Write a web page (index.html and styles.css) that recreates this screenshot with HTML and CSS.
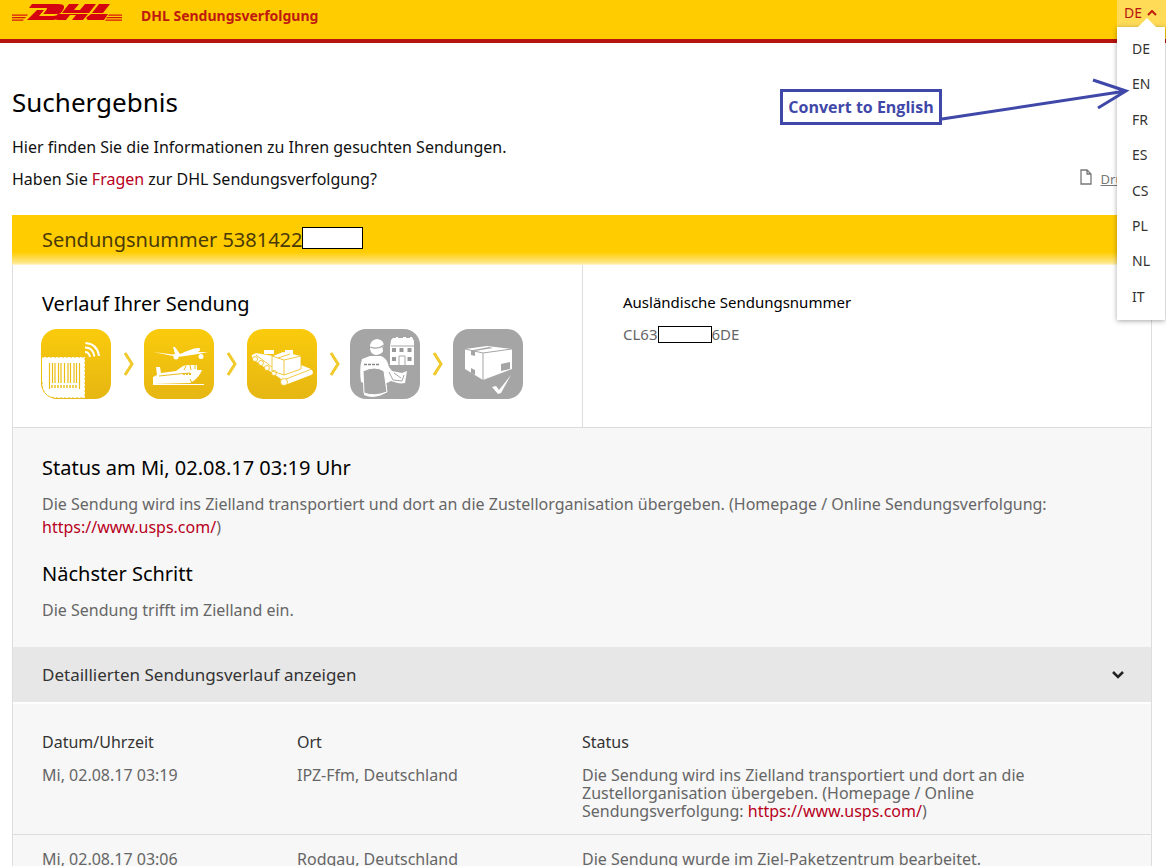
FILE: index.html
```
<!DOCTYPE html>
<html lang="de">
<head>
<meta charset="utf-8">
<title>DHL Sendungsverfolgung</title>
<link rel="stylesheet" href="styles.css">
</head>
<body>
<header class="header">
  <svg class="logo" width="112" height="18" viewBox="0 0 112 18" role="img" aria-label="DHL">
    <g fill="#d40511">
      <path d="M0 10.500h16l-1 1.300H0zM0 13h14l-1 1.300H0zM0 15.500h12l-1 1.300H0z" opacity=".9"/>
      <path d="M97 10.500h13v1.300H96zM95 13h15v1.300H94zM94 15.500h16v1.300H93z" opacity=".9"/>
      <path d="M20 0h26c7 0 7 3 5 6-2 3-3 4-5 4H32c-1 0-1 0 0-1l3-4c0-1 0-1-1-1H17zM25 6h7l-5 6h14c3 0 4-1 5-2h5c-3 4-6 6-12 6H15z"/>
      <path d="M57 0h10l-5 6h6l5-6h11l-7 9H50zM49 10h27l-5 6H60l4-5h-6l-4 5H44z"/>
      <path d="M87 0h11l-7 9H80zM79 10h17l-4 6H78c-4 0-4-2-3-3z"/>
    </g>
  </svg>
  <span class="header-title">DHL Sendungsverfolgung</span>
  <nav class="language">
    <button class="language-toggle" type="button" aria-expanded="true">DE
      <svg width="10" height="6" viewBox="0 0 10 6" aria-hidden="true"><path d="M1 5l4-4 4 4" fill="none" stroke="#c01a10" stroke-width="2"/></svg>
    </button>
    <div class="language-menu">
      <a href="#de">DE</a><a href="#en">EN</a><a href="#fr">FR</a><a href="#es">ES</a><a href="#cs">CS</a><a href="#pl">PL</a><a href="#nl">NL</a><a href="#it">IT</a>
    </div>
  </nav>
</header>

<div class="callout">Convert to English</div>
<svg class="callout-arrow" width="190" height="50" viewBox="0 0 190 50" aria-hidden="true">
  <path d="M2 44L186 16M153 5l33 11-28 17" fill="none" stroke="#3f48a8" stroke-width="3"/>
</svg>

<main class="content">
  <h1>Suchergebnis</h1>
  <p class="intro">Hier finden Sie die Informationen zu Ihren gesuchten Sendungen.</p>
  <div class="help-row">
    <p class="intro">Haben Sie <a href="#fragen">Fragen</a> zur DHL Sendungsverfolgung?</p>
    <a class="print" href="#drucken">
      <svg width="12" height="16" viewBox="0 0 12 16" aria-hidden="true"><path d="M1 1h6l4 4v10H1zM7 1v4h4" fill="none" stroke="#777" stroke-width="1.300"/></svg>
      <span>Drucken</span>
    </a>
  </div>

  <section class="panel">
    <h2 class="panel-title">Sendungsnummer 5381422<span class="redacted redacted-title"></span></h2>
    <div class="overview">
      <div class="progress">
        <h3>Verlauf Ihrer Sendung</h3>
        <div class="steps">
          <svg class="step" viewBox="0 0 70 70" role="img" aria-label="Angekündigt">
            <defs><linearGradient id="gold" x2="0" y2="1"><stop stop-color="#facb0c"/><stop offset="1" stop-color="#e6b613"/></linearGradient></defs>
            <rect width="70" height="70" rx="16" fill="url(#gold)"/>
            <path d="M1 28H44V69H17Q1 69 1 53z" fill="#fff"/>
            <path d="M1 28H44V69M1 53Q1 69 17 69H44" fill="none" stroke="#ecbd13" stroke-width="1" stroke-dasharray="2 2"/>
            <path d="M8.500 34v26M11.500 34v20M14 34v20M17.500 34v20M20 34v20M23.500 34v20M27 34v20M29.500 34v20M33 34v20M35.500 34v20M38.500 34v26" stroke="#ecbd13" stroke-width="1.200"/>
            <path d="M10 57.500h27" stroke="#ecbd13" stroke-width="3" stroke-dasharray="2 1" opacity=".7"/>
            <path d="M44 23q4 0 5 5M44 18.500q8 0 9.500 9M44.500 14q12 1 13.500 13" fill="none" stroke="#fff" stroke-width="2"/>
          </svg>
          <svg class="chevron" viewBox="0 0 13 26" aria-hidden="true"><path d="M4 2l7 11-7 11"/></svg>
          <svg class="step" viewBox="0 0 70 70" role="img" aria-label="Transport">
            <rect width="70" height="70" rx="16" fill="url(#gold)"/>
            <path d="M9 23l20 2.500 2-.5-2-7h2l5 7c7-3 14-6 18-6 3 0 3 2 0 4l10 0-10 2-13 2-8 1-4-1z" fill="#fff"/>
            <circle cx="32" cy="28" r="2.500" fill="#fff"/><circle cx="57" cy="27.500" r="2.500" fill="#fff"/>
            <path d="M9 55V48l4-2-1-8h4l1 6 15-2 7-5 5-1h9v5h5c-2 5-6 10-12 13z" fill="#fff"/>
            <path d="M15 47l19-2 12-1M42 37l-2 4M46 36l1 5M51 36v4M46 50l3 6" fill="none" stroke="#e8bc20" stroke-width="1"/>
            <path d="M39 45h8" stroke="#e8bc20" stroke-width="2" stroke-dasharray="2 1"/>
            <path d="M9 55.500h51" stroke="#fff"/>
          </svg>
          <svg class="chevron" viewBox="0 0 13 26" aria-hidden="true"><path d="M4 2l7 11-7 11"/></svg>
          <svg class="step" viewBox="0 0 70 70" role="img" aria-label="Zielland">
            <rect width="70" height="70" rx="16" fill="url(#gold)"/>
            <path d="M5 26l4-2 17 3 10-4 18 4v9l10 4q4 4 0 6L38 56q-5 0-4-6L7 31q-3-3-2-5z" fill="#fff"/>
            <path d="M17 21h10v4H17zM38 21h8v4h-8z" fill="#fff"/>
            <g fill="#fff" stroke="#efbd16" stroke-width=".8"><circle cx="8" cy="30" r="2.500"/><circle cx="14" cy="34" r="2.500"/><circle cx="20" cy="39" r="2.500"/><circle cx="27" cy="44" r="2.500"/><circle cx="37" cy="53" r="3.500"/></g>
            <path d="M25 27l12 4 17-4M37 31v15l-12-4V27M37 46l17-6V28M9 26l16 12M31 29l12-4M39 50l26-10" fill="none" stroke="#efbd16" stroke-width=".8"/>
          </svg>
          <svg class="chevron" viewBox="0 0 13 26" aria-hidden="true"><path d="M4 2l7 11-7 11"/></svg>
          <svg class="step" viewBox="0 0 70 70" role="img" aria-label="Zustellung">
            <rect width="70" height="70" rx="16" fill="#a5a5a5"/>
            <path d="M41 11l2-2h3V8h2v1h5V8h3v1h4V8h2l2 4v24H40V18z" fill="#fff"/>
            <path d="M42 19h4v4h-4zM49.500 19h4v4h-4zM57.500 19h4v4h-4zM42 28h4v4h-4zM57.500 28h4v4h-4z" fill="#999"/>
            <path d="M41 17h23M49 36v-9h6v9" fill="none" stroke="#a5a5a5"/>
            <path d="M20 20q-1-9 7-10 7 1 7 7l-2 1q3 5-2 7l-3 1q-6 0-7-6z" fill="#fff"/>
            <path d="M20 18q8 3 14-2" fill="none" stroke="#a5a5a5" stroke-width="1.300"/>
            <path d="M12 30l8-3h11q6 2 8 11l3 4 10 2 5-2-2 12-4 1-10-3-4 2v9q-12 8-23 3V54l-3-1q-2-14 1-23z" fill="#fff"/>
            <path d="M13 42q12-6 21 0l3 21q-13 5-23 1z" fill="#a5a5a5" stroke="#fff"/>
            <path d="M14 35.500h15" stroke="#888" stroke-width="1.500" stroke-dasharray="3 1"/>
            <path d="M39 43l4 8 9 1 2-6M44 44l7 5M36 55h22" fill="none" stroke="#a5a5a5"/>
          </svg>
          <svg class="chevron" viewBox="0 0 13 26" aria-hidden="true"><path d="M4 2l7 11-7 11"/></svg>
          <svg class="step" viewBox="0 0 70 70" role="img" aria-label="Zugestellt">
            <rect width="70" height="70" rx="16" fill="#a5a5a5"/>
            <path d="M12 20l22-3 25 3v20L30 51 12 40z" fill="#fff"/>
            <path d="M12 20l18 4 29-4M30 24v27" fill="none" stroke="#a5a5a5"/>
            <path d="M18 21.500l18-3.500 4 1-18 3v5l-4-1zM18 39l4 2v5l-4-2zM48 35l9-2v7l-9 2z" fill="#a5a5a5"/>
            <path d="M39 58l4-1 3 4 12-15-10 18-3 1z" fill="#fff"/>
          </svg>
        </div>
      </div>
      <div class="foreign">
        <h4>Ausländische Sendungsnummer</h4>
        <p>CL63<span class="redacted redacted-inline"></span>6DE</p>
      </div>
    </div>
    <div class="status">
      <h3>Status am Mi, 02.08.17 03:19 Uhr</h3>
      <p>Die Sendung wird ins Zielland transportiert und dort an die Zustellorganisation übergeben. (Homepage / Online Sendungsverfolgung: <a href="https://www.usps.com/">https://www.usps.com/</a>)</p>
      <h3>Nächster Schritt</h3>
      <p>Die Sendung trifft im Zielland ein.</p>
    </div>
    <button class="details-toggle" type="button">Detaillierten Sendungsverlauf anzeigen
      <svg width="14" height="10" viewBox="0 0 14 10" aria-hidden="true"><path d="M2 2l5 5 5-5" fill="none" stroke="#222" stroke-width="2.500"/></svg>
    </button>
    <table class="history">
      <colgroup><col class="col-date"><col class="col-place"><col></colgroup>
      <thead><tr><th scope="col">Datum/Uhrzeit</th><th scope="col">Ort</th><th scope="col">Status</th></tr></thead>
      <tbody>
        <tr><td>Mi, 02.08.17 03:19</td><td>IPZ-Ffm, Deutschland</td><td>Die Sendung wird ins Zielland transportiert und dort an die Zustellorganisation übergeben. (Homepage / Online Sendungsverfolgung: <a href="https://www.usps.com/">https://www.usps.com/</a>)</td></tr>
        <tr><td>Mi, 02.08.17 03:06</td><td>Rodgau, Deutschland</td><td>Die Sendung wurde im Ziel-Paketzentrum bearbeitet.</td></tr>
      </tbody>
    </table>
  </section>
</main>
</body>
</html>
```
FILE: styles.css
```
* { box-sizing: border-box; }
body {
  position: relative;
  height: 100vh;
  margin: 0;
  overflow: hidden;
  background: #fff;
  color: #111;
  font: 16px/18px "Noto Sans", "Open Sans", sans-serif;
}
h1, h2, h3, h4, p { margin: 0; font-weight: 400; }
a { color: #b8001c; text-decoration: none; }
button { border: 0; font: inherit; cursor: pointer; }

.header {
  display: flex;
  align-items: flex-start;
  height: 43px;
  padding-left: 12px;
  background: #fc0;
  border-bottom: 4px solid #b5140f;
}
.logo { margin-top: 4px; }
.header-title {
  margin: 7px auto 0 17px;
  color: #c01a10;
  font-size: 14px;
  font-weight: 700;
}
.language { position: relative; z-index: 2; width: 49px; }
.language-toggle {
  display: flex;
  align-items: center;
  gap: 5px;
  width: 100%;
  height: 27px;
  padding: 0 0 2px 7px;
  background: #ffdb57;
  color: #b5140f;
  font-size: 14px;
}
.language-menu {
  position: absolute;
  top: 27px;
  left: 0;
  display: flex;
  flex-direction: column;
  width: 48px;
  height: 293px;
  padding: 5px 0;
  background: #fff;
  box-shadow: 0 1px 5px rgba(0, 0, 0, .35);
}
.language-menu::before {
  content: "";
  position: absolute;
  top: -9px;
  left: 21px;
  border: 9px solid transparent;
  border-top: 0;
  border-bottom-color: #fff;
}
.language-menu a {
  flex: 1;
  padding-left: 15px;
  color: #333;
  font-size: 14px;
  line-height: 34px;
}

.callout {
  position: absolute;
  top: 89px;
  right: 224px;
  z-index: 3;
  width: 162px;
  border: 3px solid #3f48a8;
  background: #fff;
  color: #3f48a8;
  font: 700 16px/30px "Open Sans", sans-serif;
  text-align: center;
  white-space: nowrap;
}
.callout-arrow { position: absolute; top: 75px; right: 36px; z-index: 3; }

.content { padding: 43px 14px 0 12px; }
h1 { margin-bottom: 20px; font-size: 26px; line-height: 32px; color: #000; }
.help-row { display: flex; justify-content: space-between; margin: 14px 0 27px; }
.print { display: flex; gap: 9px; color: #777; font-size: 13px; }
.print svg { margin-top: -1px; }
.print span { text-decoration: underline; }

.panel { border: 1px solid #ddd; border-top: 0; }
.panel-title {
  display: flex;
  align-items: center;
  height: 50px;
  margin: 0 -1px;
  padding-left: 30px;
  background: linear-gradient(#fc0 74%, #ffe88a 96%, #fff6d0);
  color: #4a3a08;
  font-size: 20px;
}
.redacted { display: inline-block; border: 1px solid #000; background: #fff; }
.redacted-title { width: 61px; height: 22px; margin-bottom: 4px; }
.redacted-inline { width: 54px; height: 17px; vertical-align: -3px; }

.overview { display: flex; height: 163px; border-bottom: 1px solid #ddd; }
.progress { width: calc(50% + 1px); padding: 26px 0 0 28px; border-right: 1px solid #ddd; }
h3 { font-size: 20px; line-height: 26px; color: #000; }
.progress h3 { padding-left: 1px; }
.steps { display: flex; align-items: center; gap: 10px; margin-top: 12px; }
.step { width: 70px; height: 70px; }
.chevron { width: 13px; height: 26px; fill: none; stroke: #f0c92b; stroke-width: 3; }
.foreign { padding: 28px 0 0 40px; font-size: 15px; }
.foreign h4 { margin-bottom: 14px; color: #000; }
.foreign p { color: #666; }

.status { height: 219px; padding: 27px 40px 0 29px; background: #f7f7f7; }
.status p { margin: 12px 0 22px; color: #666; line-height: 23px; }
.details-toggle {
  display: flex;
  align-items: center;
  justify-content: space-between;
  width: 100%;
  height: 57px;
  padding: 0 26px 0 29px;
  border-bottom: 2px solid #fff;
  background: #e7e7e7;
  color: #333;
  font-size: 17px;
}

.history { width: 100%; border-collapse: collapse; table-layout: fixed; background: #f7f7f7; }
.col-date { width: 284px; }
.col-place { width: 285px; }
.history th, .history td { padding: 15px 100px 14px 0; text-align: left; vertical-align: top; font-weight: 400; }
.history th { padding: 29px 0 0; color: #333; }
.history td { color: #666; border-bottom: 1px solid #ddd; }
.history td:nth-child(-n+2) { padding-right: 0; }
.history th:first-child, .history td:first-child { padding-left: 29px; }
```
